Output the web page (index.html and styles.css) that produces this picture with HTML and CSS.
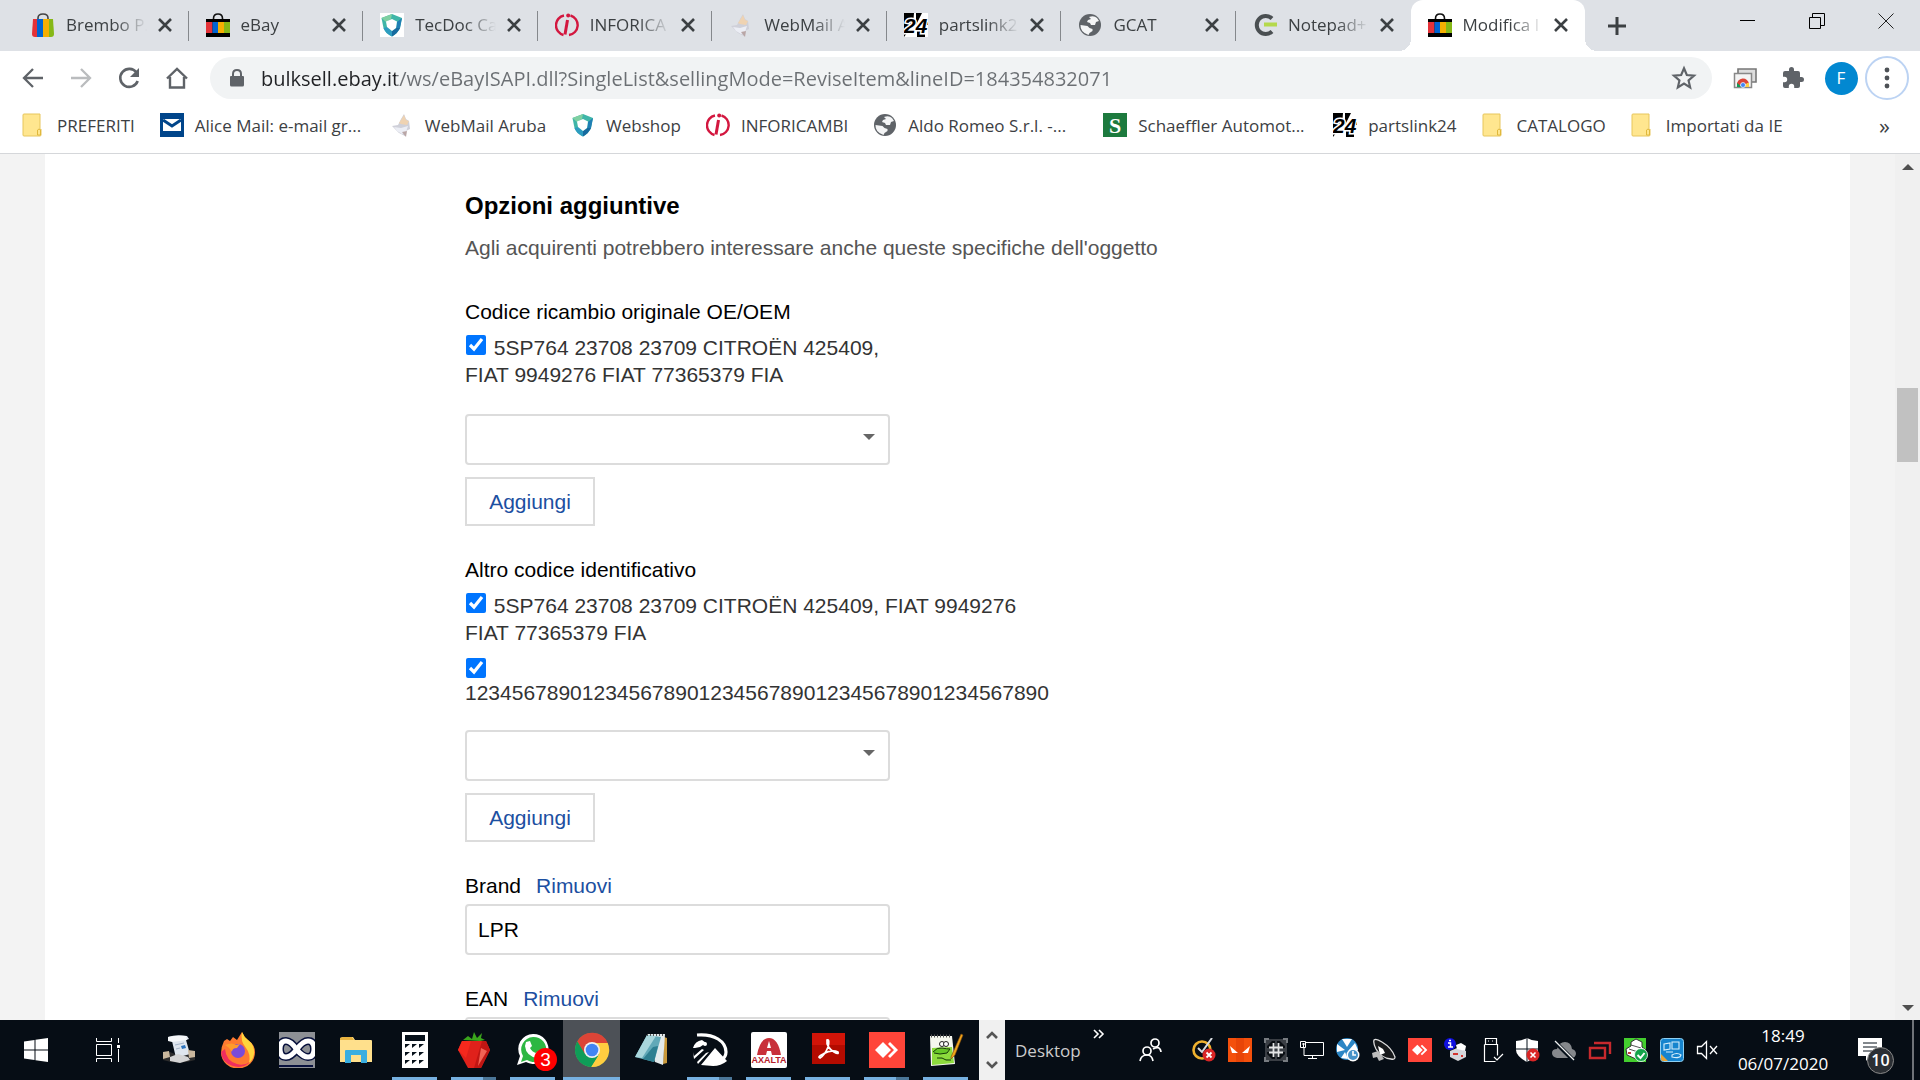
FILE: index.html
```html
<!DOCTYPE html>
<html lang="it">
<head>
  <meta charset="UTF-8" />
  <meta name="viewport" content="width=device-width, initial-scale=1"/>
  <title>Modifica l'inserzione</title>
  <link rel="stylesheet" href="styles.css">
</head>
<body>
  <!-- shared icons -->
  <svg class="sprite" aria-hidden="true">
    <symbol id="i-close" viewBox="0 0 24 24"><path d="M6 6l12 12M18 6L6 18" stroke="#3c4043" stroke-width="2.6" fill="none"/></symbol>
    <symbol id="i-bag" viewBox="0 0 24 24">
      <path d="M7.500 7V5.500Q7.500 1 12 1t4.500 4.500V7" fill="none" stroke="#111" stroke-width="1.600"/>
      <path d="M0 6h24v18H0z" fill="#000"/>
      <path d="M0 9h6.500v11H0z" fill="#e53238"/><path d="M6.500 9H12v11H6.500z" fill="#0064d2"/><path d="M12 9h6v11h-6z" fill="#f5af02"/><path d="M18 9h6v11h-6z" fill="#86b817"/>
    </symbol>
    <symbol id="i-bag2" viewBox="0 0 24 24">
      <path d="M7 8V5Q7 1 12 1t5 4v3" fill="none" stroke="#444" stroke-width="1.600"/>
      <path d="M2 6h5v18H4q-3 0-3-3z" fill="#e53238"/><path d="M6 6h6v18H6z" fill="#0064d2"/><path d="M12 6h6v18h-6z" fill="#f5af02"/><path d="M18 6h4l1 15q0 3-3 3h-2z" fill="#86b817"/>
    </symbol>
    <symbol id="i-shield" viewBox="0 0 24 24">
      <path d="M12 1L22 5 20 15q-2 5-8 8.500Q5 20 3.500 15L1.500 5z" fill="#3fb6a8"/>
      <path d="M1.500 5L12 1l-1 5-5 3z" fill="#7fd0a2"/><path d="M22 5l-2 10-4 2 1-8z" fill="#1f7fb5"/><path d="M3.500 15l4-1 4.500 4v5.500Q5 20 3.500 15z" fill="#2c9cc0"/><path d="M20 15q-2 5-8 8.500V18l4-3z" fill="#176a9f"/>
      <path d="M12 6l5 2.500-1 6.500-4 3-5-4-1-5.500z" fill="#fff"/>
    </symbol>
    <symbol id="i-info" viewBox="0 0 24 24">
      <path d="M9 2.500A10 10 0 0 0 8.500 22M15.500 2.500A10 10 0 0 1 14 22" fill="none" stroke="#d3173f" stroke-width="2.400"/>
      <path d="M12.500 7L10 21.500" stroke="#d3173f" stroke-width="3"/><circle cx="13.200" cy="2.500" r="2" fill="#d3173f"/>
    </symbol>
    <symbol id="i-aruba" viewBox="0 0 24 24">
      <path d="M2 13l6-1 3-6 3-5 2 5 3 2 1 8-4 2-1 5-6-3-5-5z" fill="#cfd0d9"/>
      <path d="M4 14l7 1 7-2-2 6-4 2-5-3z" fill="#eceef5"/><path d="M9 10l2-3 3-5 2 5 3 1-2 4-6-1z" fill="#efd3b2"/><path d="M12 19l5-1-1 6z" fill="#b9a6a6"/>
    </symbol>
    <symbol id="i-24" viewBox="0 0 24 24">
      <path d="M0 0h24v24H0z" fill="#fff"/><path d="M0 0h10l-1 12-9 12zM12 0h6l-6 12zM13 18h8v6h-8zM21 9h3v3h-3z" fill="#000"/>
      <text x="0" y="20" class="logo-24" stroke="#fff" stroke-width="3">24</text><text x="0" y="20" class="logo-24">24</text>
    </symbol>
    <symbol id="i-globe" viewBox="0 0 24 24">
      <circle cx="12" cy="12" r="11" fill="#5f6368"/>
      <path d="M2.500 12l7 1 2 2 3 1v2l-3 2-1 2Q2 19 2.500 12zM11 4q5-2 8 1l2 3-3 1-1 3h-4l-1-2-3-1 1-2 3-1z" fill="#f4f5f6"/>
    </symbol>
    <symbol id="i-folder" viewBox="0 0 24 24"><path d="M1 2q0-1 1-1h16v16l1-1v6q0 1-1 1H2q-1 0-1-1z" fill="#ffe68f" stroke="#e7c65c"/><path d="M15.500 22v-5q1.500-2 3 0v5z" fill="#ffe68f" stroke="#e0b83c"/></symbol>
    <symbol id="i-anydesk" viewBox="0 0 36 36"><path d="M0 0h36v36H0z" fill="#ff4539"/><path d="M14 10l8 8-8 8-8-8z" fill="#fff"/><path d="M19 12l2-2 8 8-8 8-2-2 6-6z" fill="#fff"/></symbol>
    <symbol id="i-up" viewBox="0 0 12 8"><path d="M1 7l5-5 5 5" fill="none" stroke="#555" stroke-width="2.600"/></symbol>
  </svg>

  <header class="browser">
    <div class="tabstrip">
      <nav class="tabs">
        <div class="tab"><svg class="ico"><use href="#i-bag2"/></svg><span class="tab-title">Brembo P.</span><button aria-label="Chiudi"><svg><use href="#i-close"/></svg></button></div>
        <div class="tab"><svg class="ico"><use href="#i-bag"/></svg><span class="tab-title">eBay</span><button aria-label="Chiudi"><svg><use href="#i-close"/></svg></button></div>
        <div class="tab"><svg class="ico boxed"><use href="#i-shield"/></svg><span class="tab-title">TecDoc Ca</span><button aria-label="Chiudi"><svg><use href="#i-close"/></svg></button></div>
        <div class="tab"><svg class="ico"><use href="#i-info"/></svg><span class="tab-title">INFORICA</span><button aria-label="Chiudi"><svg><use href="#i-close"/></svg></button></div>
        <div class="tab"><svg class="ico"><use href="#i-aruba"/></svg><span class="tab-title">WebMail A</span><button aria-label="Chiudi"><svg><use href="#i-close"/></svg></button></div>
        <div class="tab"><svg class="ico"><use href="#i-24"/></svg><span class="tab-title">partslink2</span><button aria-label="Chiudi"><svg><use href="#i-close"/></svg></button></div>
        <div class="tab"><svg class="ico"><use href="#i-globe"/></svg><span class="tab-title">GCAT</span><button aria-label="Chiudi"><svg><use href="#i-close"/></svg></button></div>
        <div class="tab"><svg class="ico" viewBox="0 0 24 24"><path d="M19 5.500A9 9 0 1 0 19 18.500" fill="none" stroke="#4a4f52" stroke-width="4"/><path d="M11 9.500h13v4H11z" fill="#b5d94c"/></svg><span class="tab-title">Notepad+</span><button aria-label="Chiudi"><svg><use href="#i-close"/></svg></button></div>
        <div class="tab active"><svg class="ico"><use href="#i-bag"/></svg><span class="tab-title">Modifica l</span><button aria-label="Chiudi"><svg><use href="#i-close"/></svg></button></div>
      </nav>
      <button class="new-tab" aria-label="Nuova scheda"><svg viewBox="0 0 18 18"><path d="M9 0v18M0 9h18" stroke="#3c4043" stroke-width="3"/></svg></button>
      <div class="window-buttons">
        <button aria-label="Riduci"><svg viewBox="0 0 16 16"><path d="M0 7.500h15" stroke="#000"/></svg></button>
        <button aria-label="Ripristina"><svg viewBox="0 0 16 16"><path d="M.5 4.500h11v11H.5zM3.500 4.500v-4h12v12h-4" fill="none" stroke="#000"/></svg></button>
        <button aria-label="Chiudi finestra"><svg viewBox="0 0 16 16"><path d="M.5 .5l15 15M15.500 .5l-15 15" stroke="#222"/></svg></button>
      </div>
    </div>

    <div class="toolbar">
      <button class="tool" aria-label="Indietro"><svg viewBox="0 0 24 24"><path d="M22 12H4M12 3l-9 9 9 9" fill="none" stroke="#5f6368" stroke-width="2.300"/></svg></button>
      <button class="tool" aria-label="Avanti"><svg viewBox="0 0 24 24"><path d="M2 12h18M12 3l9 9-9 9" fill="none" stroke="#babcbe" stroke-width="2.300"/></svg></button>
      <button class="tool" aria-label="Ricarica"><svg viewBox="0 0 24 24"><path d="M19.500 6.500A9 9 0 1 0 20.700 15" fill="none" stroke="#5f6368" stroke-width="2.600"/><path d="M22 2v9h-9z" fill="#5f6368"/></svg></button>
      <button class="tool" aria-label="Pagina iniziale"><svg viewBox="0 0 24 24"><path d="M2 12.500L12 3l10 9.500M5 11v10.500h14V11" fill="none" stroke="#5f6368" stroke-width="2.400"/></svg></button>
      <div class="address">
        <svg class="lock" viewBox="0 0 14 18"><path d="M1 7h12q1 0 1 1v8q0 1.500-1.500 1.500h-11Q0 17.500 0 16V8q0-1 1-1z" fill="#5f6368"/><path d="M3 8V5q0-4 4-4t4 4v3" fill="none" stroke="#5f6368" stroke-width="2"/></svg>
        <input type="text" class="url" aria-label="Indirizzo" value="bulksell.ebay.it/ws/eBayISAPI.dll?SingleList&amp;sellingMode=ReviseItem&amp;lineID=184354832071">
        <button class="star" aria-label="Preferiti"><svg viewBox="0 0 24 24"><path d="M12 3l2.600 6.200 6.700.6-5.100 4.400 1.500 6.500L12 17.200l-5.700 3.500 1.500-6.500-5.100-4.400 6.700-.6z" fill="none" stroke="#5f6368" stroke-width="2"/></svg></button>
      </div>
      <button class="tool" aria-label="Schede"><svg viewBox="0 0 24 24"><path d="M5 8V3h18v13h-4" fill="#ddd" stroke="#777" stroke-width="1.600"/><path d="M1.500 7.500h17v14h-17z" fill="#f4f4f4" stroke="#888" stroke-width="1.500"/><path d="M4 21v-2a6 6 0 0 1 12-1h-6z" fill="#db4437"/><path d="M4 21v-4l5 4z" fill="#0f9d58"/><path d="M11 21l3-4h2v4z" fill="#ffcd40"/><circle cx="10" cy="19" r="2.500" fill="#4285f4" stroke="#fff" stroke-width=".7"/></svg></button>
      <button class="tool" aria-label="Estensioni"><svg viewBox="0 0 24 24"><path d="M20.500 11H19V7a2 2 0 0 0-2-2h-4V3.500a2.500 2.500 0 0 0-5 0V5H4a2 2 0 0 0-2 2v3.800h1.500a2.700 2.700 0 0 1 0 5.400H2V20a2 2 0 0 0 2 2h3.800v-1.500a2.700 2.700 0 0 1 5.400 0V22H17a2 2 0 0 0 2-2v-4h1.500a2.500 2.500 0 0 0 0-5z" fill="#5f6368"/></svg></button>
      <button class="tool"><span class="avatar">F</span></button>
      <button class="tool menu" aria-label="Menu"><svg viewBox="0 0 24 24" fill="#4d5156"><circle cx="12" cy="4" r="2.400"/><circle cx="12" cy="12" r="2.400"/><circle cx="12" cy="20" r="2.400"/></svg></button>
    </div>

    <nav class="bookmarks">
      <a href="#"><svg class="ico"><use href="#i-folder"/></svg>PREFERITI</a>
      <a href="#" class="long"><svg class="ico" viewBox="0 0 24 24"><path d="M0 0h24v24H0z" fill="#00458a"/><path d="M3 6h18v12H3z" fill="#fff"/><path d="M3 7l9 6 9-6" fill="none" stroke="#00458a" stroke-width="3"/></svg>Alice Mail: e-mail gr...</a>
      <a href="#"><svg class="ico"><use href="#i-aruba"/></svg>WebMail Aruba</a>
      <a href="#"><svg class="ico"><use href="#i-shield"/></svg>Webshop</a>
      <a href="#"><svg class="ico"><use href="#i-info"/></svg>INFORICAMBI</a>
      <a href="#" class="long"><svg class="ico"><use href="#i-globe"/></svg>Aldo Romeo S.r.l. -...</a>
      <a href="#" class="long"><svg class="ico" viewBox="0 0 24 24"><path d="M0 0h24v24H0z" fill="#1d7a3e"/><text x="12" y="20" class="logo-s">S</text></svg>Schaeffler Automot...</a>
      <a href="#"><svg class="ico"><use href="#i-24"/></svg>partslink24</a>
      <a href="#"><svg class="ico"><use href="#i-folder"/></svg>CATALOGO</a>
      <a href="#"><svg class="ico"><use href="#i-folder"/></svg>Importati da IE</a>
      <button class="more">»</button>
    </nav>
  </header>

  <div class="viewport">
    <main class="page">
      <form class="specifics">
        <h2>Opzioni aggiuntive</h2>
        <p class="hint">Agli acquirenti potrebbero interessare anche queste specifiche dell'oggetto</p>

        <section class="group">
          <label class="name" for="oem">Codice ricambio originale OE/OEM</label>
          <label class="choice narrow"><input type="checkbox" checked> 5SP764 23708 23709 CITROËN 425409, FIAT 9949276 FIAT 77365379 FIA</label>
          <div class="dropdown"><select id="oem"><option></option></select></div>
          <button type="button" class="add">Aggiungi</button>
        </section>

        <section class="group">
          <label class="name" for="altro">Altro codice identificativo</label>
          <label class="choice"><input type="checkbox" checked> 5SP764 23708 23709 CITROËN 425409, FIAT 9949276 FIAT 77365379 FIA</label>
          <label class="choice stacked"><input type="checkbox" checked> 12345678901234567890123456789012345678901234567890</label>
          <div class="dropdown"><select id="altro"><option></option></select></div>
          <button type="button" class="add">Aggiungi</button>
        </section>

        <section class="group">
          <div class="name"><label for="brand">Brand</label><a href="#">Rimuovi</a></div>
          <input type="text" class="field" id="brand" value="LPR">
        </section>

        <section class="group">
          <div class="name"><label for="ean">EAN</label><a href="#">Rimuovi</a></div>
          <input type="text" class="field" id="ean">
        </section>
      </form>
    </main>
    <div class="scrollbar">
      <svg viewBox="0 0 12 6"><path d="M0 6l6-6 6 6z" fill="#505050"/></svg>
      <div class="thumb"></div>
      <svg viewBox="0 0 12 6"><path d="M0 0l6 6 6-6z" fill="#505050"/></svg>
    </div>
  </div>

  <footer class="taskbar">
    <button class="sys" aria-label="Start"><svg viewBox="0 0 24 24" fill="#fff"><path d="M0 3.400L10.500 2v9.500H0zM11.500 1.800L24 0v11.500H11.500zM0 12.500h10.500V22L0 20.600zM11.500 12.500H24V24l-12.500-1.800z"/></svg></button>
    <button class="sys" aria-label="Visualizzazione attività"><svg viewBox="0 0 24 24" fill="none" stroke="#fff"><path d="M.5 0v3.500h15V0M.5 24v-3.500h15V24M.5 6.500h15v11H.5zM22.500 0v5M22.500 11v13"/><path d="M21 7h3v3h-3z" fill="#fff" stroke="none"/></svg></button>
    <div class="apps">
      <button class="app" aria-label="Script"><svg viewBox="0 0 36 36"><path d="M2 22l7-2 5 2 14-2 6 3v5q-16 5-32 0z" fill="#2c2c2c"/><path d="M7 5q8-3 19-1l2 3-3 1 4 14-14 4-4-17-4-1z" fill="#dfe6ee"/><path d="M7 5q9-2 18-1l1 4-15 2-4-1z" fill="#f6f8fa"/><path d="M14 13l9-2M15 17l4-1" stroke="#a4b4c8"/><path d="M20 14l4-1 1 3-4 1z" fill="#2d74bd"/><path d="M2 20l6-1 1 6-7 2zM27 18l7 1v6l-6 1z" fill="#c9b79d"/><path d="M9 25l8-3 10 3 2 3-10 3-10-2z" fill="#d4d4d4"/></svg></button>
      <button class="app" aria-label="Firefox"><svg viewBox="0 0 36 36"><path d="M4 9l3-2 3 2 3-4 4 3 5-8q2 5 6 8 7 5 7 12a17 16 0 0 1-34 1Q1 15 4 9z" fill="#ff7a30"/><path d="M22 0q2 5 6 8 7 5 6 14-1 6-5 9 2-9-3-15-6-7-4-16z" fill="#ffd53d"/><path d="M1 20a17 16 0 0 0 29 10q-6 4-13 2Q6 29 5 17z" fill="#f02d5e"/><circle cx="18" cy="19" r="7" fill="#7a4bd8"/><path d="M5 13q7-3 11 0l4-1-3 4q-5 0-5 4-3-5-7-7z" fill="#ff9b2c"/></svg></button>
      <button class="app" aria-label="Infinity"><svg viewBox="0 0 36 36"><path d="M0 0h36v36H0z" fill="#8d9095"/><path d="M18 18Q12 9 7 9 1 9 1 17t6 8q5 0 11-8t11-8q6 0 6 8t-6 8q-5 0-11-7z" fill="none" stroke="#07103c" stroke-width="8"/><path d="M18 18Q12 9 7 9 1 9 1 17t6 8q5 0 11-8t11-8q6 0 6 8t-6 8q-5 0-11-7z" fill="none" stroke="#fff" stroke-width="5"/><path d="M0 34h34" stroke="#07103c" stroke-width="2"/></svg></button>
      <button class="app" aria-label="Esplora file"><svg viewBox="0 0 36 36"><path d="M2 6l3-1h10l2 3h16q1 0 1 1v21H2z" fill="#ffe08c"/><path d="M2 6l3-1h9l2 3H2z" fill="#e8b340"/><path d="M7 19q0-1 1-1h20q1 0 1 1v12h-6v-8H13v8H7z" fill="#3aaee0"/></svg></button>
      <button class="app run" aria-label="Calcolatrice"><svg viewBox="0 0 36 36"><path d="M5 0h26v36H5z" fill="#fff"/><path d="M8 3h20v6H8z" fill="#06101a"/><path d="M8 12h5l-5 4zM15 12h5l-5 4zM22 12h5l-5 4zM8 20h5l-5 4zM15 20h5l-5 4zM22 20h5l-5 4zM8 28h5l-5 4zM15 28h5l-5 4zM22 28h5l-5 4z" fill="#06101a"/></svg></button>
      <button class="app run multi" aria-label="Fragola"><svg viewBox="0 0 36 36"><path d="M6 9h24l4 9-9 18H12L2 18z" fill="#e0211b"/><path d="M26 9l-8 27h7l9-18-4-9z" fill="#c01613"/><path d="M25 16l6 3-9 15z" fill="#f26355"/><path d="M2 18L6 9h9l-5 17z" fill="#f5281d"/><path d="M7 8l5-4 4 3 2-7 3 6 5-5-1 5 4 2-5 1z" fill="#3aa51c"/></svg></button>
      <button class="app run" aria-label="WhatsApp"><svg viewBox="0 0 36 36"><path d="M18 2a15 15 0 1 1-7 28l-9 3 3-9A15 15 0 0 1 18 2z" fill="#fff"/><path d="M18 5a12.500 12.500 0 1 1-6 23l-6 2 2-6A12.500 12.500 0 0 1 18 5z" fill="#2cb742"/><path d="M11 10l4-1 2 5-2 2q2 4 6 5l2-2 4 3q-2 4-5 4-11-2-12-12z" fill="#fff"/></svg><span class="count">3</span></button>
      <button class="app current" aria-label="Chrome"><svg viewBox="0 0 36 36"><circle cx="18" cy="18" r="17" fill="#4caf50"/><path d="M3.300 9.500A17 17 0 0 1 33.700 11H18l-7.500 11z" fill="#db4437"/><path d="M33.700 11A17 17 0 0 1 17 35l8-13-7-11z" fill="#ffcd40"/><path d="M3.300 9.500A17 17 0 0 0 17 35l7-11-13-2z" fill="#0f9d58"/><circle cx="18" cy="18" r="8" fill="#f1f1f1"/><circle cx="18" cy="18" r="6.300" fill="#4285f4"/></svg></button>
      <button class="app" aria-label="Blocco note"><svg viewBox="0 0 36 36"><path d="M31 5l3 1v25l-4 1z" fill="#c9983a"/><path d="M14 2h18l-2 31-8-3z" fill="#e3eaec"/><path d="M14 3l14 2-7 25L2 25z" fill="#62a9b8"/><path d="M14 3l9 1L9 26l-7-1z" fill="#a9d6dc"/><path d="M20 15l5-1-4 16-11-3z" fill="#2e7f91"/><path d="M14 3h18" stroke="#555" stroke-width="2" stroke-dasharray="1 2"/></svg></button>
      <button class="app run multi" aria-label="Foto"><svg viewBox="0 0 36 36"><path d="M5 3Q18 2 26 7q8 5 8 13 0 5-5 9" fill="none" stroke="#fff" stroke-width="3.200"/><path d="M1 16q2-7 9-8l4 3-6 4-5 1zM1 20l1 7 10-9-2-1-8 7zM5 30l9-9 3-1L6 32zM9 33l14-17 12 13q-6 5-14 5z" fill="#fff"/><circle cx="13" cy="12" r="2" fill="#fff"/></svg></button>
      <button class="app run" aria-label="Axalta"><svg viewBox="0 0 36 36"><rect width="36" height="36" rx="2" fill="#fff"/><path d="M6 23Q9 6 18 6t12 17h-9l-1-4h-4l-1 4z" fill="#c8313a"/><path d="M18 9l2 7h-4z" fill="#fff"/><text x="18" y="31" class="logo-axalta">AXALTA</text></svg></button>
      <button class="app run" aria-label="Acrobat"><svg viewBox="0 0 36 36"><path d="M2 1h33v31H2z" fill="#b30b00"/><path d="M2 1h33v12H2z" fill="#d11408"/><path d="M17 8q3-1 1 7-3 8-8 11-3-1 3-4 9-5 15-2 1 3-4 0-8-5-7-12z" fill="none" stroke="#fff" stroke-width="1.700"/></svg></button>
      <button class="app run multi" aria-label="AnyDesk"><svg><use href="#i-anydesk"/></svg></button>
      <button class="app run" aria-label="Notepad++"><svg viewBox="0 0 36 36"><path d="M2 4h22l3 28-24 2z" fill="#f5f7ef"/><path d="M4 16l20-1 2 16-22 2z" fill="#8ddb3d"/><path d="M3 4h21" stroke="#555" stroke-width="3" stroke-dasharray="1 2"/><path d="M5 20q4-5 9-4t8 1l-3 4-7 1-6-1M9 26h5l4 2h5" fill="#68c728" stroke="#173c08"/><circle cx="14" cy="12" r="2.500" fill="#fff" stroke="#222"/><circle cx="18" cy="12" r="2.500" fill="#fff" stroke="#222"/><path d="M23 25L33 2l2 1-8 20-4 4z" fill="#f0a31a" stroke="#7d4a0d" stroke-width=".6"/></svg></button>
    </div>
    <div class="spinner">
      <button aria-label="Su"><svg><use href="#i-up"/></svg></button>
      <button aria-label="Giù"><svg class="flip"><use href="#i-up"/></svg></button>
    </div>
    <div class="desk"><span>Desktop</span><svg viewBox="0 0 12 10" fill="none" stroke="#fff" stroke-width="1.600"><path d="M1 1l4 4-4 4M6 1l4 4-4 4"/></svg></div>
    <button class="people" aria-label="Contatti"><svg viewBox="0 0 24 24" fill="none" stroke="#fff" stroke-width="1.700"><circle cx="16" cy="5" r="4"/><circle cx="8" cy="13" r="4"/><path d="M1 23q1-6 7-6 5 0 6 6M14 11q7-4 8 3"/></svg></button>
    <div class="tray">
      <svg viewBox="0 0 24 24"><circle cx="10" cy="12" r="8.500" fill="none" stroke="#efb12f" stroke-width="2.600"/><path d="M6 10l4 4L20 0" fill="none" stroke="#d8dbe0" stroke-width="2"/><circle cx="17" cy="17" r="6.500" fill="#d92626"/><path d="M14.500 14.500l5 5M19.500 14.500l-5 5" stroke="#fff" stroke-width="1.800"/></svg>
      <svg viewBox="0 0 24 24"><path d="M0 0h24v24H0z" fill="#f4500c"/><path d="M8 0h8v24H8z" fill="#e84508"/><path d="M2 8l8 7H4zM22 8l-8 7h6z" fill="#fff"/></svg>
      <svg viewBox="0 0 24 24"><path d="M1 1h22v22H1z" fill="#3a3e44"/><path d="M3 8l5-5h3v7H3zM21 8l-5-5h-3v7h8zM3 16l5 5h3v-7H3zM21 16l-5 5h-3v-7h8z" fill="#090d12"/><path d="M9.500 5v14M14.500 5v14M5 9.500h14M5 14.500h14" stroke="#e4e5e6" stroke-width="1.800"/><path d="M1 5V1h4M19 1h4v4M1 19v4h4M19 23h4v-4" fill="none" stroke="#777b80" stroke-width="2"/></svg>
      <svg viewBox="0 0 24 24" fill="none" stroke="#fff"><path d="M6 4.500h17.500v13H4v-8M.5 3.500h5v6h-5zM2 6h3M3.500 5v4M8 20.500h9M12.500 18v2"/></svg>
      <svg viewBox="0 0 24 24"><circle cx="11" cy="11" r="11" fill="#2b86c5"/><path d="M11 9L6 1h10zM9 12l-8 2V6zM13 12l6-7 3 7zM9 14l3 7-7-1z" fill="#fff"/><circle cx="17" cy="17" r="6.500" fill="#fff"/><circle cx="17" cy="17" r="5" fill="#4793c9"/><path d="M17 13v4h3" fill="none" stroke="#fff" stroke-width="1.600"/></svg>
      <svg viewBox="0 0 24 24"><path d="M2 2q2-2 8 2 10 6 13 15 0 3-4 2Q9 20 4 11 1 5 2 2z" fill="#17191b" stroke="#ddd" stroke-width="1.300"/><path d="M6 8l5 3 2 4-5 2z" fill="#fff"/><path d="M0 15l6-2 6 8-5 2-2-4-4 1z" fill="#bbb"/></svg>
      <svg><use href="#i-anydesk"/></svg>
      <svg viewBox="0 0 24 24"><path d="M6 13l7-3 9 3v6l-8 4-8-4z" fill="#d5d5da"/><path d="M12 7l5-2 5 3-1 5-8-2z" fill="#fff"/><path d="M9 16h5M17 18h2" stroke="#d3342f" stroke-width="2"/><circle cx="6" cy="6" r="6" fill="#1010e0"/><path d="M4 5h2.500v4M4 9h5M5 2.500h2" stroke="#fff" stroke-width="1.500" fill="none"/></svg>
      <svg viewBox="0 0 24 24" fill="none" stroke="#fff" stroke-width="1.200"><path d="M5.500 6V.5h11V6M4.500 6.500h13v11M4.500 6.500v17h11M8 3h1M12 3h1M14 19l3 3 6-6"/></svg>
      <svg viewBox="0 0 24 24"><path d="M11 0q5 3 11 3v9q0 6-11 12Q0 18 0 12V3q6 0 11-3z" fill="#fff"/><path d="M11 0v24M0 11h22" stroke="#06101a"/><circle cx="17" cy="17" r="6.500" fill="#d92626"/><path d="M14.500 14.500l5 5M19.500 14.500l-5 5" stroke="#fff" stroke-width="1.600"/></svg>
      <svg viewBox="0 0 24 24"><path d="M5 20q-5-1-5-5t5-4q2-7 8-7t7 7q4 1 4 5-1 4-4 4z" fill="#85888c"/><path d="M2 3l20 20" stroke="#06101a" stroke-width="4"/><path d="M3 3l19 19" stroke="#eee" stroke-width="1.300"/></svg>
      <svg viewBox="0 0 24 24" fill="none" stroke="#c7292d" stroke-width="2.400"><path d="M2 10h15v10H2zM6 5h16v11"/></svg>
      <svg viewBox="0 0 24 24"><path d="M0 0h22v24H0z" fill="#43ce2e"/><path d="M2 11l5-3V4l5-3 6 3v5l4 3-2 7-8 2-9-4z" fill="#fff" stroke="#333"/><path d="M7 7l10 3M5 11l12 4" stroke="#555"/><path d="M4 15h3M11 17h3" stroke="#c13a3a" stroke-width="2"/><circle cx="17" cy="17" r="6.500" fill="#13a34a" stroke="#fff" stroke-width=".8"/><path d="M13.500 17l3 3 4-5" fill="none" stroke="#fff" stroke-width="2"/></svg>
      <svg viewBox="0 0 24 24"><rect x=".5" y=".5" width="23" height="23" rx="3" fill="#1684ce" stroke="#8fd0f3"/><path d="M1 16l7 7H3q-2 0-2-2z" fill="#e9a434"/><path d="M4 6l6-1v6l-6 1zM12 4h7v7h-7zM6 14h7M12 17q5-3 9 0-1 4-9 2z" fill="none" stroke="#d8effb" stroke-width="1.100"/></svg>
      <svg viewBox="0 0 24 24" fill="none" stroke="#fff" stroke-width="1.300"><path d="M1.500 8.500h4l5-5v17l-5-5h-4zM14 8l7 8M21 8l-7 8"/></svg>
    </div>
    <div class="clock"><span>18:49</span><span>06/07/2020</span></div>
    <button class="notify" aria-label="Notifiche"><svg viewBox="0 0 24 24"><path d="M0 0h24v18H12l-4 5v-5H0z" fill="#fff"/><path d="M5 5h14M5 9h14M5 13h10" stroke="#06101a"/></svg><span class="total">10</span></button>
    <button class="show-desktop" aria-label="Mostra desktop"></button>
  </footer>
</body>
</html>
```

FILE: styles.css
```css
* {
  box-sizing: border-box;
}

body {
  margin: 0;
  height: 100vh;
  display: flex;
  flex-direction: column;
  overflow: hidden;
  font-family: "Liberation Sans", Arial, sans-serif;
  font-size: 21px;
  background: #fff;
}

button {
  border: 0;
  padding: 0;
  background: none;
  font: inherit;
  color: inherit;
  display: flex;
  align-items: center;
  justify-content: center;
}

a {
  color: #1c4fa1;
  text-decoration: none;
}

svg {
  display: block;
  flex: none;
}

.sprite {
  position: absolute;
  width: 0;
  height: 0;
}

.ico {
  width: 24px;
  height: 24px;
}

.boxed {
  background: #fff;
}

.logo-24 {
  font: italic bold 21px "Liberation Sans", sans-serif;
}

.logo-s {
  font: bold 22px "Liberation Serif", serif;
  fill: #fff;
  text-anchor: middle;
}

.logo-axalta {
  font: bold 9px "Liberation Sans", sans-serif;
  fill: #b5202b;
  text-anchor: middle;
}

/* browser */
.browser {
  flex: none;
  font-family: "Open Sans", sans-serif;
  font-size: 17px;
  color: #3c4043;
  border-bottom: 1px solid #d5d7da;
}

.tabstrip {
  display: flex;
  height: 51px;
  padding-left: 14px;
  background: #dee1e6;
}

.tabs {
  flex: 1;
  display: flex;
}

.tab {
  position: relative;
  flex: 1;
  min-width: 0;
  display: flex;
  align-items: center;
  padding: 0 12px 2px 17px;
}

.tab::after {
  content: "";
  position: absolute;
  right: 0;
  top: 11px;
  width: 1px;
  height: 30px;
  background: #85888c;
}

.tab:nth-child(8)::after {
  display: none;
}

.tab.active {
  background: #fff;
  border-radius: 12px 12px 0 0;
}

/* curved feet of the active tab */
.tab.active::before,
.tab.active::after {
  content: "";
  position: absolute;
  top: auto;
  bottom: 0;
  width: 12px;
  height: 12px;
}

.tab.active::before {
  left: -12px;
  background: radial-gradient(circle at 0 0, transparent 12px, #fff 12px);
}

.tab.active::after {
  right: -12px;
  background: radial-gradient(circle at 100% 0, transparent 12px, #fff 12px);
}

.tab-title {
  flex: 1;
  min-width: 0;
  margin: 0 6px 0 11px;
  overflow: hidden;
  white-space: nowrap;
  -webkit-mask-image: linear-gradient(to left, transparent, #000 32px);
  mask-image: linear-gradient(to left, transparent, #000 32px);
}

.tab button svg {
  width: 24px;
  height: 24px;
}

.new-tab {
  width: 64px;
}

.new-tab svg {
  width: 18px;
  height: 18px;
}

.window-buttons {
  display: flex;
  margin-left: 64px;
  height: 42px;
}

.window-buttons button {
  width: 69px;
}

.window-buttons svg {
  width: 16px;
  height: 16px;
}

.toolbar {
  display: flex;
  align-items: center;
  height: 54px;
  padding: 0 11px 0 9px;
}

.tool {
  width: 48px;
  height: 44px;
}

.tool svg {
  width: 24px;
  height: 24px;
}

.address {
  flex: 1;
  display: flex;
  align-items: center;
  height: 42px;
  margin: 0 9px;
  padding: 0 15px 0 20px;
  border-radius: 21px;
  background: #f1f3f4;
}

.lock {
  width: 14px;
  height: 20px;
}

.url {
  flex: 1;
  margin-left: 17px;
  padding: 0;
  border: 0;
  font: 20px "Open Sans", sans-serif;
  background: linear-gradient(to right, #202124 135px, #6b6f73 135px);
  -webkit-background-clip: text;
  background-clip: text;
  color: transparent;
}

.star svg {
  width: 26px;
  height: 26px;
}

.avatar {
  width: 33px;
  height: 33px;
  line-height: 32px;
  border-radius: 50%;
  background: #0288d1;
  color: #fff;
}

.menu {
  width: 44px;
  border: 2px solid #bcd3f3;
  border-radius: 50%;
}

.bookmarks {
  display: flex;
  align-items: center;
  height: 48px;
  padding: 0 30px 8px 22px;
  gap: 25px;
}

.bookmarks a {
  display: flex;
  align-items: center;
  gap: 11px;
  white-space: nowrap;
  color: #3c4043;
}

.bookmarks .long {
  width: 205px;
}

.more {
  margin-left: auto;
  font-size: 22px;
}

/* listing form */
.viewport {
  flex: 1;
  min-height: 0;
  display: flex;
  background: #f3f3f3;
}

.page {
  flex: 1;
  margin: 0 45px;
  padding: 38px 0 0 420px;
  background: #fff;
  overflow: hidden;
}

.specifics {
  max-width: 780px;
}

h2 {
  margin: 0;
  font-size: 24px;
  line-height: 27px;
  color: #000;
}

.hint {
  margin: 15px 0 37px;
  line-height: 27px;
  color: #555;
}

.group {
  margin-bottom: 30px;
}

.name {
  display: block;
  line-height: 27px;
}

.name a {
  margin-left: 15px;
}

.choice {
  display: block;
  max-width: 600px;
  margin-top: 9px;
  line-height: 27px;
  color: #333;
}

.narrow {
  max-width: 425px;
}

.stacked {
  margin-top: 12px;
  line-height: 22px;
}

.choice input {
  width: 20px;
  height: 20px;
  margin: 0 2px 0 1px;
  accent-color: #0075ff;
}

.dropdown {
  position: relative;
  max-width: 425px;
  margin: 26px 0 12px;
}

.dropdown::after {
  content: "";
  position: absolute;
  right: 15px;
  top: 20px;
  border: 6px solid transparent;
  border-top-color: #666;
  border-bottom: 0;
  pointer-events: none;
}

.dropdown select,
.field {
  display: block;
  width: 100%;
  max-width: 425px;
  height: 51px;
  padding: 0 11px;
  border: 2px solid #dcdcdc;
  border-radius: 4px;
  background: #fff;
  font: inherit;
  color: #000;
  appearance: none;
}

.field {
  margin-top: 5px;
}

.add {
  width: 130px;
  height: 49px;
  border: 2px solid #dcdcdc;
  color: #1c4fa1;
}

.scrollbar {
  display: flex;
  flex-direction: column;
  align-items: center;
  width: 25px;
  padding: 10px 2px 9px;
  background: #f0f0f0;
}

.scrollbar svg {
  width: 12px;
  height: 6px;
}

.thumb {
  width: 100%;
  height: 74px;
  margin: 218px 0 auto;
  background: #c1c1c1;
}

/* taskbar */
.taskbar {
  flex: none;
  display: flex;
  height: 60px;
  background: #060d15;
  color: #fff;
  font-family: "Open Sans", sans-serif;
  font-size: 17px;
}

.sys {
  width: 72px;
}

.sys svg {
  width: 24px;
  height: 24px;
}

.apps {
  display: flex;
  gap: 2px;
  margin-left: 6px;
}

.app {
  position: relative;
  width: 57px;
}

.app svg {
  width: 36px;
  height: 36px;
}

.app.run::after,
.app.current::after {
  content: "";
  position: absolute;
  left: 6px;
  right: 6px;
  bottom: 0;
  height: 3px;
  background: #76b0e0;
}

.app.multi::after {
  background: linear-gradient(to right, #76b0e0 32px, #4b7698 32px);
}

.app.current {
  background: #4d5157;
}

.app.current::after {
  left: 0;
  right: 0;
}

.count {
  position: absolute;
  right: 4px;
  bottom: 9px;
  width: 23px;
  height: 23px;
  border-radius: 50%;
  background: #f00;
  font: 19px/23px "Liberation Sans", sans-serif;
}

.spinner {
  display: flex;
  flex-direction: column;
  width: 26px;
  margin-left: 5px;
  background: #f0f0f0;
}

.spinner button {
  flex: 1;
}

.spinner svg {
  width: 12px;
  height: 8px;
}

.flip {
  transform: rotate(180deg);
}

.desk {
  display: flex;
  align-items: center;
  width: 118px;
  padding-left: 10px;
  gap: 12px;
  color: #ccc;
}

.desk svg {
  width: 12px;
  height: 10px;
  margin-bottom: 33px;
}

.people {
  width: 56px;
}

.people svg {
  width: 24px;
  height: 24px;
}

.tray {
  display: flex;
  align-items: center;
  gap: 12px;
  margin-left: auto;
}

.tray svg {
  width: 24px;
  height: 24px;
}

.clock {
  display: flex;
  flex-direction: column;
  justify-content: center;
  width: 126px;
  text-align: center;
  line-height: 28px;
}

.notify {
  position: relative;
  width: 48px;
  margin-right: 18px;
}

.notify svg {
  width: 24px;
  height: 24px;
}

.total {
  position: absolute;
  right: 0;
  bottom: 6px;
  width: 27px;
  height: 27px;
  border: 1px solid #888;
  border-radius: 50%;
  background: #2b2f34;
  font-size: 16px;
  font-weight: 600;
  line-height: 24px;
}

.show-desktop {
  width: 8px;
  border-left: 2px solid #6f7378;
}
```
